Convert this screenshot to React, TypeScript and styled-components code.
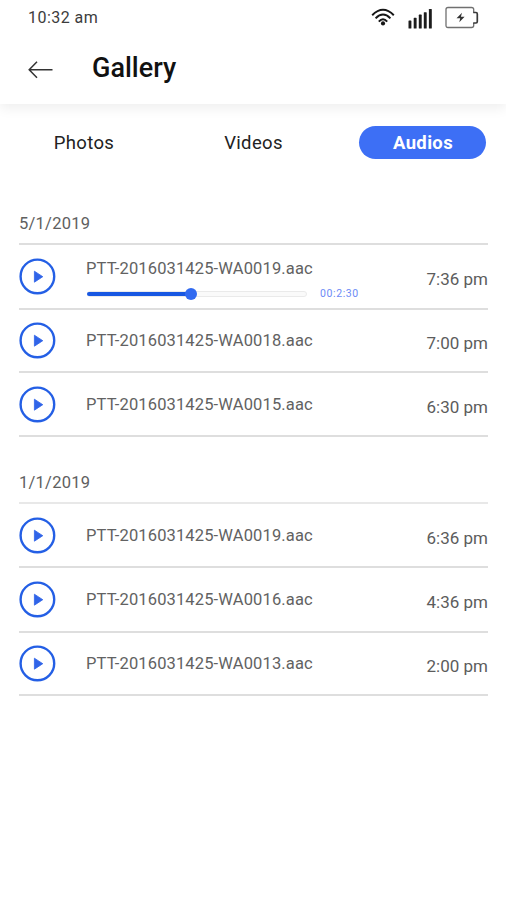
import React from 'react';
import styled, { createGlobalStyle } from 'styled-components';

const GlobalStyle = createGlobalStyle`
  * { box-sizing: border-box; }
  body {
    margin: 0;
    background: #fff;
    font-family: Roboto, 'Liberation Sans', sans-serif;
  }
`;

const Screen = styled.div`
  width: 506px;
  height: 900px;
  overflow: hidden;
  background: #fff;
`;

const Header = styled.header`
  height: 104px;
  background: #fff;
  box-shadow: 0 4px 12px rgba(0, 0, 0, 0.07);
`;

const StatusBar = styled.div`
  display: flex;
  justify-content: space-between;
  height: 36px;
  padding: 0 27px 0 28px;
`;

const Clock = styled.span`
  font-size: 16px;
  line-height: 35px;
  letter-spacing: 0.45px;
  color: #3c3c3c;
`;

const StatusIcons = styled.div`
  display: flex;
  align-items: flex-start;
`;

const TitleBar = styled.div`
  display: flex;
  align-items: center;
  height: 64px;
  padding-left: 27px;
`;

const BackButton = styled.button`
  display: flex;
  width: 27px;
  height: 20px;
  margin: 3px 38px 0 0;
  padding: 0;
  border: 0;
  background: none;
`;

const Title = styled.h1`
  margin: 0;
  font-size: 27px;
  font-weight: 500;
  line-height: 32px;
  color: #111;
`;

const Tabs = styled.nav`
  display: flex;
  justify-content: space-between;
  padding: 22px 20px 0;
`;

const Tab = styled.button<{ $active?: boolean }>`
  width: 127px;
  height: 33px;
  padding: 1px 0 0 1px;
  border: 0;
  border-radius: 17px;
  background: ${p => (p.$active ? '#3d6ff5' : 'transparent')};
  color: ${p => (p.$active ? '#fff' : '#222')};
  font-family: inherit;
  font-size: 18.5px;
  font-weight: ${p => (p.$active ? 700 : 400)};
  letter-spacing: 0.35px;
`;

const Group = styled.section<{ $top: number }>`
  margin: ${p => p.$top}px 18px 0 19px;
`;

const GroupDate = styled.h2<{ $faint?: boolean }>`
  height: 31px;
  margin: 0;
  border-bottom: 2px solid ${p => (p.$faint ? '#e8e8e8' : '#dedede')};
  font-size: 16.5px;
  font-weight: 400;
  line-height: 20px;
  letter-spacing: 0.25px;
  color: #606060;
`;

const Row = styled.div<{ $height: number }>`
  display: flex;
  align-items: center;
  height: ${p => p.$height}px;
  border-bottom: 2px solid #dedede;
`;

const PlayButton = styled.button`
  display: flex;
  width: 37px;
  height: 37px;
  margin: 0 30px 0 0;
  padding: 0;
  border: 0;
  background: none;
`;

const Details = styled.div`
  flex: 1;
  padding-top: 1px;
`;

const FileName = styled.div`
  font-size: 16.5px;
  font-weight: 400;
  line-height: 20px;
  letter-spacing: 0.14px;
  color: #626262;
`;

const Player = styled.div`
  display: flex;
  align-items: center;
  height: 12px;
  margin: 9px 0 -5px 1px;
`;

const Track = styled.div`
  display: flex;
  align-items: center;
  width: 220px;
  height: 6px;
  border: 1px solid #eaeaea;
  border-radius: 3px;
  background: #fafafa;
`;

const Progress = styled.div`
  flex: none;
  height: 4px;
  margin-left: -1px;
  border-radius: 2px 0 0 2px;
  background: #1757e2;
`;

const Knob = styled.div`
  flex: none;
  width: 12px;
  height: 12px;
  margin-left: -3px;
  border-radius: 50%;
  background: #316af0;
`;

const Elapsed = styled.span`
  margin-left: 13px;
  font-size: 10.5px;
  line-height: 12px;
  letter-spacing: 0.6px;
  color: #6c8af6;
`;

const Time = styled.time`
  padding-top: 5px;
  font-size: 17px;
  line-height: 20px;
  color: #5c5c5c;
`;

const WifiIcon = () => (
  <svg width="24" height="20" viewBox="0 0 24 20" fill="none" stroke="#161616" strokeWidth="2">
    <path d="M1.2 7.2Q12 -3.6 22.8 7.2" />
    <path d="M4.6 10.4Q12 2.8 19.4 10.4" />
    <path d="M7.8 13.6Q12 8.8 16.2 13.6" />
    <circle cx="12" cy="15.4" r="2.1" fill="#161616" stroke="none" />
  </svg>
);

const SignalIcon = () => (
  <svg width="25" height="21" viewBox="0 0 25 21" fill="#1c1c1c">
    <rect x="0.5" y="12.4" width="2.9" height="8.2" rx="0.6" />
    <rect x="5.7" y="9.8" width="2.9" height="10.8" rx="0.6" />
    <rect x="10.8" y="6.6" width="2.9" height="14" rx="0.6" />
    <rect x="15.8" y="4.2" width="2.9" height="16.4" rx="0.6" />
    <rect x="20.9" y="1" width="2.9" height="19.6" rx="0.6" />
  </svg>
);

const BatteryIcon = () => (
  <svg width="34" height="24" viewBox="0 0 34 24" fill="none">
    <path
      d="M3 1.5H26.5Q28.7 1.5 28.7 3.5V6.5M28.7 17V19.5Q28.7 21.5 26.5 21.5H3Q1 21.5 1 19.5V3.5Q1 1.5 3 1.5"
      stroke="#707070"
      strokeWidth="1.3"
    />
    <path d="M28.2 6.5H31Q32.3 6.5 32.3 8V15.5Q32.3 17 31 17H28.2" stroke="#383838" strokeWidth="1.7" />
    <path d="M17 6.8L11.5 12.2H15.2L14.3 16.2L19.6 10.8H15.9Z" fill="#333" />
  </svg>
);

const WifiSlot = styled.span`
  display: flex;
  margin: 8px 13px 0 0;
`;

const SignalSlot = styled.span`
  display: flex;
  margin: 8px 12px 0 0;
`;

const BatterySlot = styled.span`
  display: flex;
  margin-top: 6px;
`;

const BackIcon = () => (
  <svg width="27" height="20" viewBox="0 0 27 20" fill="none" stroke="#333" strokeWidth="1.5">
    <path d="M25.5 9.7H2.5M10 1.7L2.2 9.7L10 17.7" />
  </svg>
);

const PlayIcon = () => (
  <svg width="37" height="37" viewBox="0 0 37 37">
    <circle cx="18.4" cy="18.4" r="16.8" fill="none" stroke="#245fe5" strokeWidth="2.4" />
    <path d="M15.4 13.2V24.2L23.8 18.7Z" fill="#3064e8" stroke="#3064e8" strokeWidth="0.8" strokeLinejoin="round" />
  </svg>
);

interface Audio {
  name: string;
  time: string;
  height: number;
  elapsed?: string;
  progress?: number;
}

interface AudioGroup {
  date: string;
  top: number;
  faint?: boolean;
  items: Audio[];
}

const groups: AudioGroup[] = [
  {
    date: '5/1/2019',
    top: 55,
    items: [
      { name: 'PTT-2016031425-WA0019.aac', time: '7:36 pm', height: 65, elapsed: '00:2:30', progress: 101 },
      { name: 'PTT-2016031425-WA0018.aac', time: '7:00 pm', height: 63 },
      { name: 'PTT-2016031425-WA0015.aac', time: '6:30 pm', height: 64 },
    ],
  },
  {
    date: '1/1/2019',
    top: 36,
    faint: true,
    items: [
      { name: 'PTT-2016031425-WA0019.aac', time: '6:36 pm', height: 64 },
      { name: 'PTT-2016031425-WA0016.aac', time: '4:36 pm', height: 65 },
      { name: 'PTT-2016031425-WA0013.aac', time: '2:00 pm', height: 63 },
    ],
  },
];

const AudioRow = ({ item }: { item: Audio }) => (
  <Row $height={item.height}>
    <PlayButton aria-label="Play">
      <PlayIcon />
    </PlayButton>
    <Details>
      <FileName>{item.name}</FileName>
      {item.elapsed && (
        <Player>
          <Track>
            <Progress style={{ width: item.progress }} />
            <Knob />
          </Track>
          <Elapsed>{item.elapsed}</Elapsed>
        </Player>
      )}
    </Details>
    <Time>{item.time}</Time>
  </Row>
);

export default function App() {
  return (
    <Screen>
      <GlobalStyle />
      <Header>
        <StatusBar>
          <Clock>10:32 am</Clock>
          <StatusIcons>
            <WifiSlot><WifiIcon /></WifiSlot>
            <SignalSlot><SignalIcon /></SignalSlot>
            <BatterySlot><BatteryIcon /></BatterySlot>
          </StatusIcons>
        </StatusBar>
        <TitleBar>
          <BackButton aria-label="Back"><BackIcon /></BackButton>
          <Title>Gallery</Title>
        </TitleBar>
      </Header>
      <Tabs>
        <Tab>Photos</Tab>
        <Tab>Videos</Tab>
        <Tab $active>Audios</Tab>
      </Tabs>
      {groups.map(g => (
        <Group key={g.date} $top={g.top}>
          <GroupDate $faint={g.faint}>{g.date}</GroupDate>
          {g.items.map(item => (
            <AudioRow key={item.time} item={item} />
          ))}
        </Group>
      ))}
    </Screen>
  );
}
